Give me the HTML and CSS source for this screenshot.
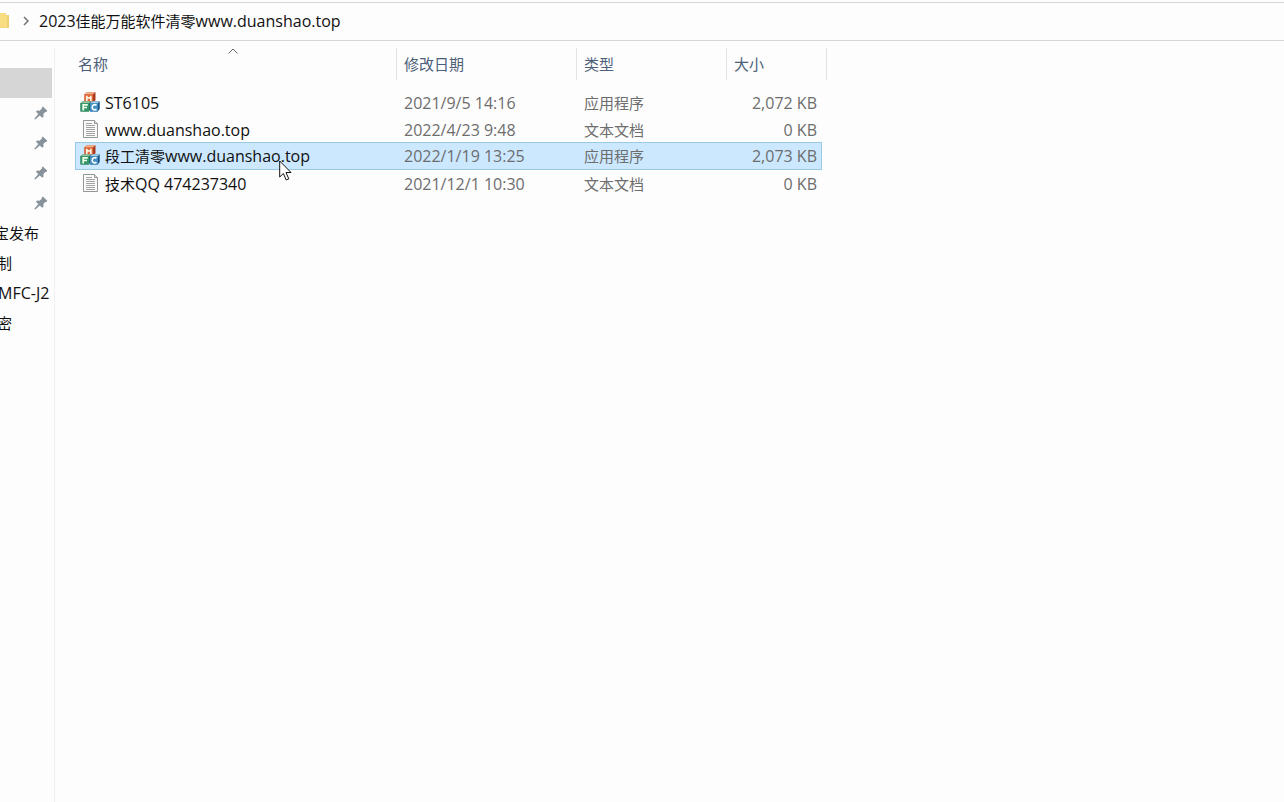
FILE: index.html
```html
<!DOCTYPE html>
<html lang="zh-CN">
<head>
<meta charset="utf-8">
<title>2023佳能万能软件清零www.duanshao.top</title>
<link rel="stylesheet" href="styles.css">
</head>
<body>
<svg class="defs" aria-hidden="true">
  <symbol id="pin" viewBox="0 0 14 14">
    <path d="M8.800.6 13.300 4.800l-1 1.200-.9-.1L9.300 8l.3 2.600-1.300 1.200-2.500-2.400L1.300 13.500l-1-.8L4.300 8 1.900 5.700l1.200-1.200 2.500.2L7.900 2.600l-.2-.9z" fill="#87929a"/>
  </symbol>
  <symbol id="mfc" viewBox="0 0 20 20">
    <path d="M4.500 2.200 7 .3h8.500v8l-2.500 2H4.500z" fill="#a93a20"/>
    <path d="M4.500 2.200H13v8.300H4.500z" fill="#e0683a"/>
    <path d="M4.500 2.200 7 .3h8.500L13 2.200z" fill="#f6b48c"/>
    <path d="M6.800 3.700v5.500M10.800 3.700v5.500M6.800 5.800h4" stroke="#fff4df" stroke-width="1.700"/>
    <path d="M.5 11 2.800 9.200h8V17l-2 2.500H.5z" fill="#1f6654"/>
    <path d="M.5 11h8.700v8.500H.5z" fill="#37976b"/>
    <path d="M.5 11 2.800 9.200h8L9.200 11z" fill="#9ac7a0"/>
    <path d="M3.200 18.500v-5.700h4.600M3.200 15.500h3.800" fill="none" stroke="#efffe9" stroke-width="1.700"/>
    <path d="M10 11l2.300-1.800h7.400V17l-2 2.500H10z" fill="#154f87"/>
    <path d="M10 11h8v8.500h-8z" fill="#438dc1"/>
    <path d="M10 11l2.300-1.800h7.400L18 11z" fill="#a4cfe3"/>
    <path d="M16.500 13.300c-1.700-1.300-4.300-.5-4.300 2s2.600 3.300 4.300 2" fill="none" stroke="#f0faff" stroke-width="1.700"/>
  </symbol>
  <symbol id="doc" viewBox="0 0 20 20">
    <path d="M3.500 1.500h11l3 3v14h-14z" fill="#fafafa" stroke="#969696"/>
    <path d="M14.500 1.500v3h3" fill="#ddd" stroke="#969696"/>
    <path d="M6 4.500h6M6 6.500h9M6 8.500h9M6 10.500h9M6 12.500h9M6 14.500h9M6 16.500h9" stroke="#a3a3a3"/>
  </symbol>
</svg>

<div class="window">
  <header class="address">
    <svg class="folder" viewBox="0 0 9 16" aria-hidden="true"><path d="M0 0h6v2h3v13H0z" fill="#f8dc81"/><path d="M7 2h2v13H7z" fill="#f0cf70"/></svg>
    <svg class="chevron" viewBox="0 0 6 10" aria-hidden="true"><path d="M1 1l4 4-4 4" fill="none" stroke="#707070" stroke-width="1.500"/></svg>
    <h1 class="path">2023<span class="han">佳能万能软件清零</span>www.duanshao.top</h1>
  </header>
  <div class="body">
    <nav class="sidebar" aria-label="快速访问">
      <ul class="places">
        <li class="place current"></li>
        <li class="place pinned"><svg class="pin"><use href="#pin"/></svg></li>
        <li class="place pinned"><svg class="pin"><use href="#pin"/></svg></li>
        <li class="place pinned"><svg class="pin"><use href="#pin"/></svg></li>
        <li class="place pinned"><svg class="pin"><use href="#pin"/></svg></li>
        <li class="place"><a class="link long" href="#"><span class="han">宝发布</span></a></li>
        <li class="place"><a class="link" href="#"><span class="han">制</span></a></li>
        <li class="place"><a class="link latin" href="#">MFC-J2</a></li>
        <li class="place"><a class="link" href="#"><span class="han">密</span></a></li>
      </ul>
    </nav>
    <main class="content">
      <table class="files">
        <colgroup><col class="col-name"><col class="col-date"><col class="col-type"><col class="col-size"><col class="col-end"></colgroup>
        <thead>
          <tr>
            <th class="first" aria-sort="ascending"><button class="sort han">名称</button><svg class="caret" viewBox="0 0 10 6" aria-hidden="true"><path d="M.5 5.500 5 1l4.500 4.500" fill="none" stroke="#666"/></svg></th>
            <th><button class="sort han">修改日期</button></th>
            <th><button class="sort han">类型</button></th>
            <th colspan="2"><button class="sort han">大小</button></th>
          </tr>
        </thead>
        <tbody>
          <tr>
            <td><span class="name"><svg class="icon"><use href="#mfc"/></svg><span>ST6105</span></span></td>
            <td>2021/9/5 14:16</td><td><span class="han">应用程序</span></td><td class="size">2,072 KB</td>
          </tr>
          <tr>
            <td><span class="name"><svg class="icon"><use href="#doc"/></svg><span>www.duanshao.top</span></span></td>
            <td>2022/4/23 9:48</td><td><span class="han">文本文档</span></td><td class="size">0 KB</td>
          </tr>
          <tr class="selected">
            <td><span class="name"><svg class="icon"><use href="#mfc"/></svg><span><span class="han">段工清零</span>www.duanshao.top</span></span></td>
            <td>2022/1/19 13:25</td><td><span class="han">应用程序</span></td><td class="size">2,073 KB</td>
          </tr>
          <tr>
            <td><span class="name"><svg class="icon"><use href="#doc"/></svg><span><span class="han">技术</span>QQ 474237340</span></span></td>
            <td>2021/12/1 10:30</td><td><span class="han">文本文档</span></td><td class="size">0 KB</td>
          </tr>
        </tbody>
      </table>
    </main>
  </div>
  <svg class="cursor" viewBox="0 0 13 21" aria-hidden="true"><path d="M.7 1v16l3.700-3.500 2.800 6.500 2.600-1.100-2.800-6.400h5z" fill="#fff" stroke="#111"/></svg>
</div>
</body>
</html>
```
FILE: styles.css
```css
* {
  box-sizing: border-box;
}

body {
  margin: 0;
  background: #fdfdfd;
  color: #111;
  font: 16px/26px "Open Sans", "Noto Sans CJK SC", sans-serif;
}

.defs {
  position: absolute;
  width: 0;
  height: 0;
}

.window {
  position: relative;
  display: flex;
  flex-direction: column;
  min-height: 100vh;
  padding-top: 2px;
  overflow: hidden;
}

.address {
  display: flex;
  align-items: center;
  height: 39px;
  padding-bottom: 2px;
  border-top: 1px solid #d5d5d5;
  border-bottom: 1px solid #d5d5d5;
}

.folder {
  width: 9px;
  height: 16px;
}

.chevron {
  width: 6px;
  height: 10px;
  margin: 0 10px 0 14px;
}

.path {
  margin: 0;
  font-size: 16px;
  font-weight: 400;
}

.han {
  font-family: "Noto Sans CJK SC", sans-serif;
  font-size: 15px;
  line-height: 1;
}

.body {
  display: flex;
  flex: 1;
  padding-top: 7px;
}

.sidebar {
  width: 55px;
  padding: 20px 2px 0 0;
  border-right: 1px solid #f0f0f0;
}

.places {
  margin: 0;
  padding: 0;
  list-style: none;
}

.place {
  display: flex;
  align-items: center;
  height: 30px;
}

.current {
  background: #d6d6d6;
}

.pinned {
  justify-content: flex-end;
  padding-right: 4px;
}

.pin {
  width: 14px;
  height: 14px;
}

.link {
  margin-left: -3px;
  color: inherit;
  text-decoration: none;
  white-space: nowrap;
}

.long {
  margin-left: -6px;
}

.latin {
  margin-left: -2px;
}

.content {
  flex: 1;
  padding-left: 20px;
}

.files {
  width: 752px;
  table-layout: fixed;
  border-collapse: separate;
  border-spacing: 0;
}

.col-name {
  width: 322px;
}

.col-date {
  width: 180px;
}

.col-type {
  width: 150px;
}

.col-size {
  width: 95px;
}

.col-end {
  width: 5px;
}

th {
  position: relative;
  height: 32px;
  padding: 0 0 0 7px;
  border-right: 1px solid #e2e2e2;
  text-align: left;
}

.first {
  padding-left: 3px;
}

.sort {
  display: block;
  padding: 0;
  border: 0;
  background: none;
  color: #4c607a;
  line-height: 26px;
}

.caret {
  position: absolute;
  top: 0;
  left: 153px;
  width: 10px;
  height: 6px;
}

tbody::before {
  content: "";
  display: table-row;
  height: 9px;
}

td {
  height: 27px;
  padding: 0 0 0 7px;
  border: 0 solid #99c9e8;
  color: #6d6d6d;
  line-height: 26px;
  white-space: nowrap;
}

td:first-child {
  padding-left: 5px;
  color: #111;
}

.size {
  padding: 0 5px 0 0;
  text-align: right;
}

.name {
  display: flex;
  align-items: center;
  gap: 5px;
}

.icon {
  width: 20px;
  height: 20px;
  margin-bottom: 2px;
}

.selected td {
  border-bottom-width: 1px;
  background: #cce8ff;
  box-shadow: 0 -1px #99c9e8;
}

.selected td:first-child {
  padding-left: 4px;
  border-left-width: 1px;
}

.selected .size {
  padding-right: 4px;
  border-right-width: 1px;
}

.cursor {
  position: absolute;
  top: 160px;
  left: 279px;
  width: 13px;
  height: 21px;
}
```
